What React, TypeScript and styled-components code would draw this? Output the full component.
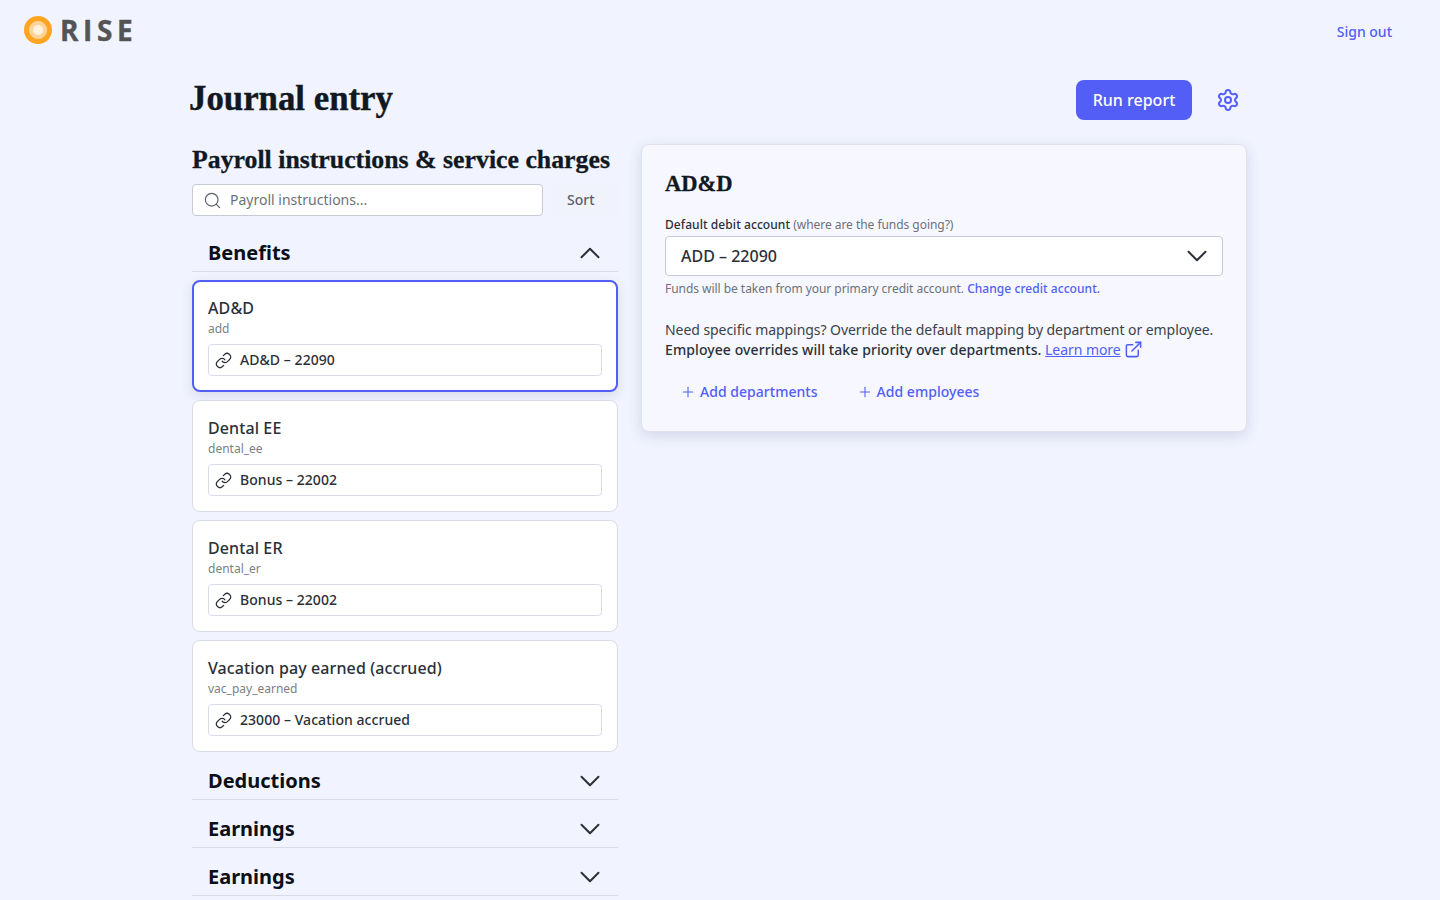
import styled, { createGlobalStyle } from 'styled-components';
import { ChevronDown, ChevronUp, ExternalLink, Link, Plus, Search, Settings } from 'lucide-react';

interface IInstruction {
    name: string,
    code: string,
    account: string,
    selected?: boolean,
}

const instructions: IInstruction[] = [
    { name: 'AD&D', code: 'add', account: 'AD&D – 22090', selected: true },
    { name: 'Dental EE', code: 'dental_ee', account: 'Bonus – 22002' },
    { name: 'Dental ER', code: 'dental_er', account: 'Bonus – 22002' },
    { name: 'Vacation pay earned (accrued)', code: 'vac_pay_earned', account: '23000 – Vacation accrued' },
];

const collapsedSections = ['Deductions', 'Earnings', 'Earnings'];

function App() {
    return (
        <Page>
            <GlobalStyle />
            <TopBar>
                <Logo>
                    <LogoMark />
                    <LogoText>RISE</LogoText>
                </Logo>
                <SignOut href="#">Sign out</SignOut>
            </TopBar>
            <Main>
                <TitleRow>
                    <Title>Journal entry</Title>
                    <Actions>
                        <RunButton>Run report</RunButton>
                        <GearButton><Settings size={24} strokeWidth={2} /></GearButton>
                    </Actions>
                </TitleRow>
                <Columns>
                    <LeftColumn>
                        <ListTitle>Payroll instructions &amp; service charges</ListTitle>
                        <SearchRow>
                            <SearchBox>
                                <Search size={19} strokeWidth={1.5} color="#5b6068" />
                                <SearchText>Payroll instructions...</SearchText>
                            </SearchBox>
                            <SortButton>Sort</SortButton>
                        </SearchRow>
                        <SectionHeader $first>
                            <SectionName>Benefits</SectionName>
                            <ChevronUp size={34} strokeWidth={1.4} color="#2b3038" />
                        </SectionHeader>
                        <CardList>
                            {instructions.map(item => (
                                <Card key={item.code} $selected={item.selected}>
                                    <CardName>{item.name}</CardName>
                                    <CardCode>{item.code}</CardCode>
                                    <AccountBox>
                                        <LinkIcon size={17} strokeWidth={1.7} />
                                        {item.account}
                                    </AccountBox>
                                </Card>
                            ))}
                        </CardList>
                        {collapsedSections.map((name, i) => (
                            <SectionHeader key={i}>
                                <SectionName>{name}</SectionName>
                                <ChevronDown size={34} strokeWidth={1.4} color="#2b3038" />
                            </SectionHeader>
                        ))}
                    </LeftColumn>
                    <DetailCard>
                        <DetailTitle>AD&amp;D</DetailTitle>
                        <FieldLabel>
                            <strong>Default debit account</strong> (where are the funds going?)
                        </FieldLabel>
                        <SelectBox>
                            ADD – 22090
                            <ChevronDown size={34} strokeWidth={1.4} color="#2b3038" />
                        </SelectBox>
                        <Hint>
                            Funds will be taken from your primary credit account. <a href="#">Change credit account.</a>
                        </Hint>
                        <Description>
                            Need specific mappings? Override the default mapping by department or employee.<br />
                            <strong>Employee overrides will take priority over departments.</strong>{' '}
                            <LearnMore href="#">Learn more</LearnMore>
                            <ExternalIcon size={19} strokeWidth={1.9} />
                        </Description>
                        <AddRow>
                            <AddButton><Plus size={16} strokeWidth={1.6} />Add departments</AddButton>
                            <AddButton><Plus size={16} strokeWidth={1.6} />Add employees</AddButton>
                        </AddRow>
                    </DetailCard>
                </Columns>
            </Main>
        </Page>
    );
}

const GlobalStyle = createGlobalStyle`
    html, body {
        margin: 0;
        height: 100%;
        overflow: hidden;
        background: #f1f4fe;
    }
    body {
        font-family: "Noto Sans", "Open Sans", sans-serif;
        color: #2b3038;
    }
`;

const Page = styled.div`
    width: 1440px;
    height: 900px;
    overflow: hidden;
`;

const TopBar = styled.header`
    height: 60px;
    padding: 0 48px 0 24px;
    display: flex;
    justify-content: space-between;
    align-items: center;
`;

const Logo = styled.div`
    display: flex;
    align-items: center;
    gap: 9px;
`;

const LogoMark = styled.div`
    width: 28px;
    height: 28px;
    box-sizing: border-box;
    border-radius: 50%;
    border: 5px solid #ffa51f;
    background: #fff3e0;
    box-shadow: inset 0 0 0 4px #ffd49a;
`;

const LogoText = styled.span`
    font-family: "Open Sans", sans-serif;
    font-weight: 700;
    font-size: 28px;
    line-height: 28px;
    letter-spacing: 4.6px;
    margin-left: -1px;
    -webkit-text-stroke: 0.4px #545454;
    color: #545454;
`;

const SignOut = styled.a`
    font-size: 14px;
    line-height: 20px;
    font-weight: 500;
    color: #525ef5;
    text-decoration: none;
    margin-top: 4px;
`;

const Main = styled.main`
    width: 1055px;
    margin-left: 192px;
`;

const TitleRow = styled.div`
    height: 60px;
    padding-top: 10px;
    display: flex;
    justify-content: space-between;
    align-items: center;
`;

const Title = styled.h1`
    margin: -3px 0 0 -3px;
    font-family: "Liberation Serif", serif;
    font-size: 34.8px;
    font-weight: 700;
    -webkit-text-stroke: 0.4px #121821;
    color: #121821;
`;

const Actions = styled.div`
    display: flex;
    align-items: center;
    gap: 24px;
`;

const RunButton = styled.button`
    width: 116px;
    height: 40px;
    border: 0;
    border-radius: 8px;
    background: #525ef5;
    color: #fff;
    font-family: inherit;
    font-size: 16px;
    font-weight: 500;
`;

const GearButton = styled.div`
    width: 24px;
    height: 24px;
    margin-right: 7px;
    color: #525ef5;
`;

const Columns = styled.div`
    display: flex;
    gap: 23px;
    align-items: flex-start;
    margin-top: 14px;
`;

const LeftColumn = styled.div`
    width: 426px;
    flex: none;
`;

const ListTitle = styled.h2`
    margin: 0;
    font-family: "Liberation Serif", serif;
    font-size: 25.8px;
    line-height: 32px;
    font-weight: 700;
    -webkit-text-stroke: 0.3px #121821;
    color: #121821;
    white-space: nowrap;
`;

const SearchRow = styled.div`
    display: flex;
    gap: 8px;
    margin-top: 8px;
`;

const SearchBox = styled.div`
    width: 351px;
    height: 32px;
    box-sizing: border-box;
    display: flex;
    align-items: center;
    gap: 8px;
    padding: 0 10px;
    background: #fff;
    border: 1px solid #c5cad6;
    border-radius: 4px;
`;

const SearchText = styled.span`
    font-size: 14px;
    color: #6d7279;
    margin-bottom: 1px;
`;

const SortButton = styled.div`
    flex: 1;
    height: 32px;
    box-sizing: border-box;
    display: flex;
    align-items: center;
    padding: 0 0 2px 16px;
    font-size: 14px;
    font-weight: 500;
    color: #5b6068;
    background: #f0f3fc;
`;

const SectionHeader = styled.div<{ $first?: boolean }>`
    height: ${p => (p.$first ? '40px' : '48px')};
    box-sizing: border-box;
    display: flex;
    align-items: center;
    justify-content: space-between;
    padding: ${p => (p.$first ? '2px 11px 0 16px' : '10px 11px 0 16px')};
    border-bottom: 1px solid #d8dce8;
    margin-top: ${p => (p.$first ? '16px' : '0')};
`;

const SectionName = styled.span`
    font-size: 20px;
    line-height: 28px;
    font-weight: 700;
    color: #0b0f16;
`;

const CardList = styled.div`
    display: flex;
    flex-direction: column;
    gap: 8px;
    margin: 8px 0 0;
`;

const Card = styled.div<{ $selected?: boolean }>`
    height: 112px;
    box-sizing: border-box;
    padding: ${p => (p.$selected ? '15px 14px' : '16px 15px')};
    background: #fff;
    border: ${p => (p.$selected ? '2px solid #525ef5' : '1px solid #d8dce8')};
    border-radius: 8px;
    box-shadow: ${p => (p.$selected ? '0 4px 12px rgba(60, 70, 130, 0.14)' : 'none')};
`;

const CardName = styled.div`
    font-size: 16px;
    line-height: 22px;
    font-weight: 500;
    letter-spacing: 0.1px;
    color: #2b3038;
`;

const CardCode = styled.div`
    font-size: 12px;
    line-height: 18px;
    margin-top: 1px;
    color: #7b7f86;
`;

const AccountBox = styled.div`
    height: 32px;
    box-sizing: border-box;
    margin-top: 6px;
    display: flex;
    align-items: center;
    gap: 8px;
    padding: 0 7px 2px 6px;
    font-size: 14px;
    font-weight: 500;
    letter-spacing: 0.05px;
    color: #2b3038;
    border: 1px solid #d8dce8;
    border-radius: 4px;
`;

const LinkIcon = styled(Link)`
    flex: none;
    margin-top: 2px;
`;

const DetailCard = styled.section`
    width: 606px;
    height: 288px;
    box-sizing: border-box;
    padding: 24px 23px 0;
    background: #f6f7ff;
    border: 1px solid #dfe2ee;
    border-radius: 8px;
    box-shadow: 0 4px 14px rgba(60, 70, 130, 0.17);
`;

const DetailTitle = styled.h3`
    margin: 0;
    font-family: "Liberation Serif", serif;
    font-size: 22.5px;
    line-height: 30px;
    font-weight: 700;
    -webkit-text-stroke: 0.3px #121821;
    color: #121821;
`;

const FieldLabel = styled.div`
    margin-top: 17px;
    font-size: 12px;
    line-height: 18px;
    letter-spacing: -0.04px;
    color: #6d7279;
    strong {
        font-weight: 500;
        letter-spacing: 0.07px;
        color: #2b3038;
    }
`;

const SelectBox = styled.div`
    height: 40px;
    box-sizing: border-box;
    margin-top: 2px;
    display: flex;
    align-items: center;
    justify-content: space-between;
    padding: 0 8px 0 15px;
    font-size: 16px;
    font-weight: 500;
    color: #2b3038;
    background: #fff;
    border: 1px solid #c5cad6;
    border-radius: 4px;
`;

const Hint = styled.div`
    margin-top: 4px;
    font-size: 12px;
    line-height: 18px;
    letter-spacing: -0.04px;
    color: #6d7279;
    a {
        font-weight: 500;
        letter-spacing: 0.05px;
        color: #525ef5;
        text-decoration: none;
    }
`;

const Description = styled.p`
    margin: 22px 0 0;
    font-size: 14px;
    line-height: 20px;
    letter-spacing: -0.06px;
    color: #3d424a;
    strong {
        font-weight: 500;
        letter-spacing: 0.09px;
        color: #2b3038;
    }
`;

const LearnMore = styled.a`
    color: #525ef5;
    text-decoration: underline;
`;

const ExternalIcon = styled(ExternalLink)`
    color: #525ef5;
    vertical-align: -4px;
    margin-left: 3px;
`;

const AddRow = styled.div`
    display: flex;
    gap: 39px;
    margin-top: 22px;
    padding-left: 15px;
`;

const AddButton = styled.div`
    display: flex;
    align-items: center;
    gap: 4px;
    font-size: 14px;
    line-height: 20px;
    font-weight: 500;
    letter-spacing: 0.03px;
    color: #525ef5;
`;

export default App;
